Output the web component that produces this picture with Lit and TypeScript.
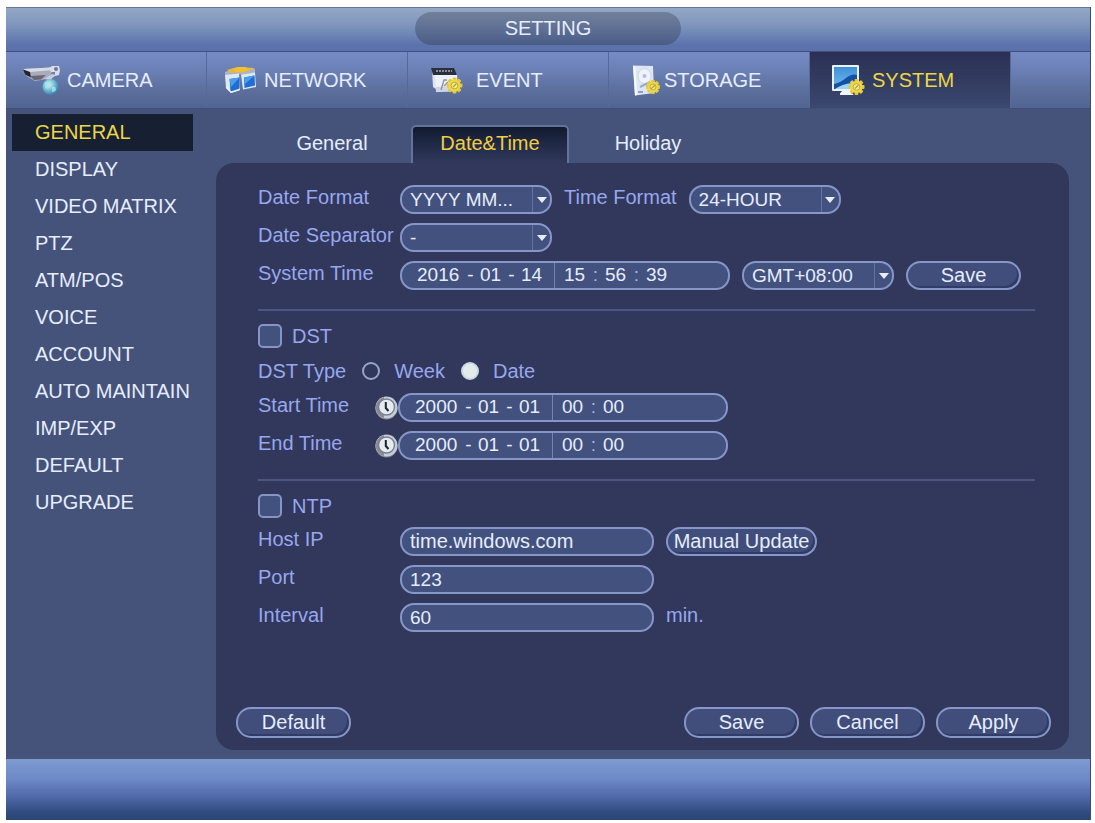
import { LitElement, html, svg, css, nothing, TemplateResult } from "lit";
import { customElement, state } from "lit/decorators.js";
import { classMap } from "lit/directives/class-map.js";

const gear = (x: number, y: number, r: number) => svg`
  <g transform="translate(${x} ${y})">
    ${[0, 45, 90, 135].map(
      (a) => svg`<rect x=${-r} y="-1.9" width=${r * 2} height="3.8" rx="0.8" fill="#e2c93a" transform="rotate(${a})"/>`
    )}
    <circle r=${r * 0.74} fill="#ecd84a"/>
    <circle r=${r * 0.42} fill="#f5ea8c" stroke="#b89c2c" stroke-width="0.8"/>
    <path d="M-1.6 1.6 L1.8 -1.8" stroke="#b89c24" stroke-width="1.3"/>
  </g>`;

const icons: Record<string, TemplateResult> = {
  camera: html`<svg class="icon" width="41" height="36" viewBox="0 0 41 36" aria-hidden="true">
    <defs>
      <radialGradient id="globe" cx="0.4" cy="0.35" r="0.75">
        <stop offset="0" stop-color="#d8f6fa"/><stop offset="0.5" stop-color="#6fb9d4"/><stop offset="1" stop-color="#2a6c9c"/>
      </radialGradient>
    </defs>
    <path d="M1 7 L28 5.5 L31 8 L28 14 L22 17.5 L13 19 L6 15 L2 12 Z" fill="#a9acbd"/>
    <path d="M1 7 L28 5.5 L31 8 L8 10 Z" fill="#d9dce6"/>
    <path d="M1 7.5 L8 10 L9 15.5 L3 12.5 Z" fill="#23242f"/>
    <path d="M8 14 L24 13 L19 17.5 L12 18 Z" fill="#6a6674"/>
    <path d="M27 6 L30 4 L37 4 L38 8 L37 13 L33 14 L33 10 L29 10 Z" fill="#d9dde9"/>
    <circle cx="34" cy="7" r="2" fill="#6e7898"/>
    <path d="M22 17 L30 12 L34 13 L28 18 Z" fill="#c8cddd"/>
    <circle cx="28.5" cy="25" r="8" fill="url(#globe)"/>
    <path d="M23 21 q4 -3 6 0 t-2 5 t-4 -1 Z M30 25 q4 -1 4 2 t-4 3 Z" fill="#a9e4e6" opacity="0.8"/>
  </svg>`,
  network: html`<svg class="icon" width="37" height="36" viewBox="0 0 37 36" aria-hidden="true">
    <path d="M2 10 L14 6 L32 7 L32 11 L16 12.5 L2 14 Z" fill="#a9b4c8"/>
    <path d="M4 8 L14 5 L32 6 L26 9 L8 11 Z" fill="#e8b83c"/>
    <path d="M11 7.5 L15 5 L23 5 L25 8 L20 10.5 L14 10.5 Z" fill="#f0c030"/>
    <path d="M2 13 L16 11.5 L17 28 L8 31 L3 26 Z" fill="#dce8f6"/>
    <path d="M6.5 17 L16.5 15.5 L16.5 27.5 L7.5 30 Z" fill="#1f6fd2"/>
    <path d="M6.5 17 L16.5 15.5 L8 25 Z" fill="#4a9eec"/>
    <path d="M18 12.5 L32 10.5 L33 25 L20 27.5 Z" fill="#dce8f6"/>
    <path d="M21 15.5 L31.5 13.5 L32 23.5 L21.5 26 Z" fill="#1f6fd2"/>
    <path d="M21 15.5 L31.5 13.5 L22 22 Z" fill="#4a9eec"/>
    <path d="M3 26 L8 31 L17 28 V26.5 L8 29.5 L3.5 24 Z" fill="#f4f8fd"/>
  </svg>`,
  event: html`<svg class="icon" width="48" height="36" viewBox="0 0 48 36" aria-hidden="true">
    <path d="M8 8 L12 8 L12 27 L9 25 Z" fill="#dfe3ee"/>
    <path d="M11 12 L33 12 L34 29 L12 30 Z" fill="#eef1f8"/>
    <path d="M12 25 L33 24 L34 29 L12 30 Z" fill="#cfd5e4"/>
    <path d="M7 6 H30 L33 13 H9 Z" fill="#2b2f3d"/>
    <path d="M12 9 H28" stroke="#a8aebd" stroke-width="1.5" stroke-dasharray="2 1"/>
    <path d="M17 28 L20 18 L23 18 M20 24 L24 20" stroke="#8d94a8" stroke-width="1.4" fill="none"/>
    ${gear(30.5, 23.5, 8)}
  </svg>`,
  storage: html`<svg class="icon" width="35" height="36" viewBox="0 0 35 36" aria-hidden="true">
    <path d="M8 3.5 L28 4 L29 31 L10 33.5 Z" fill="#dde6f4"/>
    <path d="M8 3.5 L10.5 5 L12 33 L10 33.5 Z" fill="#f7fafe"/>
    <ellipse cx="19.5" cy="14" rx="6.5" ry="7.5" fill="#eef3fa" stroke="#c8d3e5" stroke-width="0.8"/>
    <circle cx="19.5" cy="14" r="2" fill="#b2bfd6"/>
    <path d="M15 25 L23 21" stroke="#9caac6" stroke-width="2"/>
    <path d="M13 30 h5" stroke="#8aa0cc" stroke-width="2"/>
    ${gear(28, 25, 7)}
  </svg>`,
  system: html`<svg class="icon" width="42" height="36" viewBox="0 0 42 36" aria-hidden="true">
    <defs>
      <linearGradient id="screen" x1="0" y1="0" x2="0" y2="1">
        <stop offset="0" stop-color="#3f8fd6"/><stop offset="1" stop-color="#6fc0f0"/>
      </linearGradient>
    </defs>
    <rect x="6" y="3" width="27" height="26" rx="1" fill="#eaf2fb"/>
    <rect x="8" y="5" width="23" height="22" fill="url(#screen)"/>
    <path d="M8 22 Q14 21 20 16 T31 13 V27 H8 Z" fill="#1550a4"/>
    <path d="M9 27 Q16 22 26 21 V27 Z" fill="#9cd6f4"/>
    <path d="M16 29 H25 V31 L28 33 H14 V31.5 Z" fill="#f2f6fb"/>
    ${gear(30.5, 25, 8)}
  </svg>`,
};

const clockIcon = html`<svg width="24" height="26" viewBox="0 0 24 26" aria-hidden="true">
  <circle cx="12.5" cy="13.5" r="11" fill="#7f8290"/>
  <circle cx="12.5" cy="12.5" r="11" fill="#c9ccd6"/>
  <path d="M2 15 A11 11 0 0 1 10 2 L10 23 A11 11 0 0 1 2 15" fill="#8d8a90"/>
  <circle cx="12.5" cy="12" r="8" fill="#e6ebec" stroke="#74809c" stroke-width="1.4"/>
  <path d="M11.8 7 V13 L14.5 16" fill="none" stroke="#1c2333" stroke-width="2"/>
</svg>`;

@customElement("app-root")
export class AppRoot extends LitElement {
  @state() private section = "system";
  @state() private page = "GENERAL";
  @state() private tab = "Date&Time";

  private sections = ["camera", "network", "event", "storage", "system"];
  private pages = [
    "GENERAL", "DISPLAY", "VIDEO MATRIX", "PTZ", "ATM/POS", "VOICE",
    "ACCOUNT", "AUTO MAINTAIN", "IMP/EXP", "DEFAULT", "UPGRADE",
  ];
  private tabs = ["General", "Date&Time", "Holiday"];

  static styles = css`
    :host {
      display: flex;
      box-sizing: border-box;
      min-height: 100vh;
      padding: 7px 4px 3px 6px;
      background: #fff;
      font-family: "Liberation Sans", Arial, sans-serif;
      font-size: 20px;
      line-height: 24px;
      color: #e6edfb;
    }
    * { box-sizing: border-box; }
    button, input, select {
      font: inherit;
      color: inherit;
      margin: 0;
      padding: 0;
      border: 0;
      background: none;
      border-radius: 0;
    }
    .window {
      flex: 1;
      min-width: 0;
      display: flex;
      flex-direction: column;
      background: #45537b;
      border-right: 1px solid #3d4a70;
    }
    .titlebar {
      display: flex;
      justify-content: center;
      padding: 4px 0 6px;
      border-top: 1px solid #66789b;
      border-bottom: 1px solid #3f5083;
      background: linear-gradient(#93a8c4, #7f95bd 40%, #5c74ae 85%, #5a70a8);
    }
    .title {
      margin: 0;
      width: 266px;
      padding: 4px 0 5px;
      border-radius: 17px;
      text-align: center;
      font-size: 20px;
      font-weight: 400;
      background: linear-gradient(#71809a, #5f7095 50%, #4a5c86);
    }
    .nav {
      display: flex;
      height: 57px;
      border-bottom: 1px solid #415079;
      background: linear-gradient(#768bc6, #6a7fb3 35%, #5b6e9c 70%, #526492);
    }
    .nav-item {
      flex: 0 1 201px;
      display: flex;
      align-items: center;
      gap: 4px;
      padding-left: 16px;
      padding-bottom: 1px;
      border-right: 1px solid #566998;
      text-decoration: none;
      color: inherit;
    }
    .nav-item.active {
      color: #ecd648;
      background: linear-gradient(#2b3055, #333e62 60%, #3b4870);
    }
    .icon { flex: none; }
    .main { flex: 1; display: flex; }
    .sidebar {
      flex: none;
      width: 210px;
      padding: 5px 23px 0 6px;
      display: flex;
      flex-direction: column;
    }
    .side-item {
      height: 37px;
      padding: 6px 0 0 23px;
      white-space: nowrap;
      text-decoration: none;
      color: inherit;
    }
    .side-item.active { color: #ecd648; background: #172033; }
    .content {
      flex: 1;
      min-width: 0;
      display: flex;
      flex-direction: column;
      padding: 16px 21px 9px 0;
    }
    .tabs { display: flex; padding-left: 37px; }
    .tab {
      width: 158px;
      height: 38px;
      padding-bottom: 4px;
      border: 2px solid transparent;
      border-bottom: 0;
      border-radius: 5px 5px 0 0;
    }
    .tab.active {
      color: #f0cf3e;
      border-color: #62739a;
      background: linear-gradient(#111a2d, #1d2744 40%, #31385b);
    }
    .panel {
      flex: 1;
      display: flex;
      flex-direction: column;
      padding: 22px 18px 12px 20px;
      border-radius: 18px;
      background: #31385b;
    }
    .group {
      display: flex;
      flex-direction: column;
      gap: 9px;
      margin: 0 16px 0 22px;
      color: #98a7ee;
    }
    .group + .group {
      margin-top: 19px;
      padding-top: 13px;
      border-top: 2px solid #4b5885;
    }
    .row { display: flex; align-items: center; gap: 12px; min-height: 29px; }
    .tick-row { display: flex; align-items: center; gap: 10px; height: 24px; }
    .radio-row { display: flex; align-items: center; height: 27px; }
    .label { width: 130px; padding-bottom: 5px; white-space: nowrap; }
    .inline-label { padding-bottom: 5px; white-space: nowrap; }
    .field {
      height: 29px;
      border: 2px solid #8796c8;
      border-radius: 14px;
      background: #43517f;
      color: #e6edfb;
    }
    .text { width: 254px; padding-left: 8px; }
    .digits { font-size: 19px; }
    .select { position: relative; width: 152px; }
    .select select {
      width: 100%;
      height: 25px;
      padding: 0 20px 0 8px;
      appearance: none;
      font-size: 19px;
    }
    .select option { color: #000; }
    .arrow {
      position: absolute;
      top: 0;
      right: 0;
      width: 18px;
      height: 25px;
      display: grid;
      place-items: center;
      border-left: 1px solid #6272a6;
      pointer-events: none;
    }
    .stamp { width: 330px; display: flex; font-size: 19px; overflow: hidden; }
    .part { display: flex; align-items: center; }
    .date { padding: 0 11px 0 15px; border-right: 1px solid #7484b8; }
    .time { padding-left: 9px; }
    .part input { width: 22px; height: 25px; padding-bottom: 2px; }
    .part .year { width: 44px; }
    .dash, .colon { width: 19px; padding-bottom: 2px; text-align: center; }
    .colon { color: #aab6e4; }
    .stamp-row { display: flex; align-items: center; min-height: 29px; }
    .stamp-row .label { width: 116px; }
    .clock { display: grid; width: 24px; height: 26px; cursor: pointer; }
    .pill {
      width: 115px;
      height: 29px;
      padding-bottom: 1px;
      border: 2px solid #8796c8;
      border-radius: 15px;
      background: #414e7b;
      box-shadow: inset -2px -2px 0 #303b66;
      color: #e6edfb;
      cursor: pointer;
      white-space: nowrap;
    }
    .pill.wide { width: 151px; }
    .actions {
      display: flex;
      gap: 11px;
      margin-top: auto;
      padding-top: 24px;
    }
    .actions .pill { height: 31px; }
    .actions .first { margin-right: auto; }
    .check {
      appearance: none;
      width: 24px;
      height: 24px;
      border: 2px solid #8795c4;
      border-radius: 5px;
      background: #43517f;
    }
    .check:checked { background: #c8d6f4; }
    .radio {
      appearance: none;
      width: 18px;
      height: 18px;
      border: 2px solid #98a6c8;
      border-radius: 50%;
      margin: 0 14px 0 16px;
    }
    .radio:checked { background: #e2ebea; border-color: #ccd8e0; }
    .footer {
      height: 61px;
      background: linear-gradient(#7d9bd0, #6c87c6 35%, #5069a8 62%, #2f4b80 88%, #2b4673);
    }
  `;

  private select(id: string, options: string[], label?: string) {
    return html`<span class="field select">
      <select id=${id} aria-label=${label ?? nothing}>
        ${options.map((o) => html`<option>${o}</option>`)}
      </select>
      <span class="arrow"><svg width="10" height="6" viewBox="0 0 10 6" aria-hidden="true"><path d="M0 0 H10 L5 6 Z" fill="#e6edfb"/></svg></span>
    </span>`;
  }

  private stamp(name: string, id: string, date: string[], time: string[]) {
    const units = ["year", "month", "day"];
    const clock = ["hour", "minute", "second"];
    return html`<div class="field stamp" role="group" aria-label=${name}>
      <span class="part date">
        ${date.map((v, i) => html`${i ? html`<span class="dash">-</span>` : nothing}<input
          id=${i ? nothing : id} class=${units[i]} aria-label="${name} ${units[i]}" .value=${v}>`)}
      </span>
      <span class="part time">
        ${time.map((v, i) => html`${i ? html`<span class="colon">:</span>` : nothing}<input
          aria-label="${name} ${clock[i]}" .value=${v}>`)}
      </span>
    </div>`;
  }

  private period(name: string, id: string) {
    return html`<div class="stamp-row">
      <label class="label" for=${id}>${name}</label>
      <button class="clock" type="button" aria-label="Pick ${name}">${clockIcon}</button>
      ${this.stamp(name, id, ["2000", "01", "01"], ["00", "00"])}
    </div>`;
  }

  render() {
    return html`<div class="window">
      <header class="titlebar"><h1 class="title">SETTING</h1></header>
      <nav class="nav" aria-label="Sections">
        ${this.sections.map((s) => html`<a href="#${s}"
          class=${classMap({ "nav-item": true, active: s === this.section })}
          @click=${() => (this.section = s)}>${icons[s]}<span>${s.toUpperCase()}</span></a>`)}
      </nav>
      <div class="main">
        <nav class="sidebar" aria-label="Pages">
          ${this.pages.map((p) => html`<a href="#${p.toLowerCase()}"
            class=${classMap({ "side-item": true, active: p === this.page })}
            @click=${() => (this.page = p)}>${p}</a>`)}
        </nav>
        <div class="content">
          <div class="tabs" role="tablist">
            ${this.tabs.map((t) => html`<button type="button" role="tab" aria-selected=${t === this.tab}
              class=${classMap({ tab: true, active: t === this.tab })}
              @click=${() => (this.tab = t)}>${t}</button>`)}
          </div>
          <form class="panel" @submit=${(e: Event) => e.preventDefault()}>
            <div class="group">
              <div class="row">
                <label class="label" for="date-format">Date Format</label>
                ${this.select("date-format", ["YYYY MM..."])}
                <label class="inline-label" for="time-format">Time Format</label>
                ${this.select("time-format", ["24-HOUR", "12-HOUR"])}
              </div>
              <div class="row">
                <label class="label" for="separator">Date Separator</label>
                ${this.select("separator", ["-", "/", "."])}
              </div>
              <div class="row">
                <label class="label" for="system-time">System Time</label>
                ${this.stamp("System Time", "system-time", ["2016", "01", "14"], ["15", "56", "39"])}
                ${this.select("zone", ["GMT+08:00"], "Time zone")}
                <button class="pill" type="button">Save</button>
              </div>
            </div>
            <div class="group">
              <div class="tick-row">
                <input class="check" type="checkbox" id="dst"><label for="dst">DST</label>
              </div>
              <div class="radio-row" role="radiogroup" aria-label="DST Type">
                <span>DST Type</span>
                <input class="radio" type="radio" name="dst-type" id="week"><label for="week">Week</label>
                <input class="radio" type="radio" name="dst-type" id="date" checked><label for="date">Date</label>
              </div>
              ${this.period("Start Time", "start")}
              ${this.period("End Time", "end")}
            </div>
            <div class="group">
              <div class="tick-row">
                <input class="check" type="checkbox" id="ntp"><label for="ntp">NTP</label>
              </div>
              <div class="row">
                <label class="label" for="host">Host IP</label>
                <input class="field text" id="host" .value=${"time.windows.com"}>
                <button class="pill wide" type="button">Manual Update</button>
              </div>
              <div class="row">
                <label class="label" for="port">Port</label>
                <input class="field text digits" id="port" .value=${"123"}>
              </div>
              <div class="row">
                <label class="label" for="interval">Interval</label>
                <input class="field text digits" id="interval" .value=${"60"}>
                <span class="inline-label">min.</span>
              </div>
            </div>
            <div class="actions">
              <button class="pill first" type="button">Default</button>
              <button class="pill" type="submit">Save</button>
              <button class="pill" type="button">Cancel</button>
              <button class="pill" type="button">Apply</button>
            </div>
          </form>
        </div>
      </div>
      <footer class="footer"></footer>
    </div>`;
  }
}
